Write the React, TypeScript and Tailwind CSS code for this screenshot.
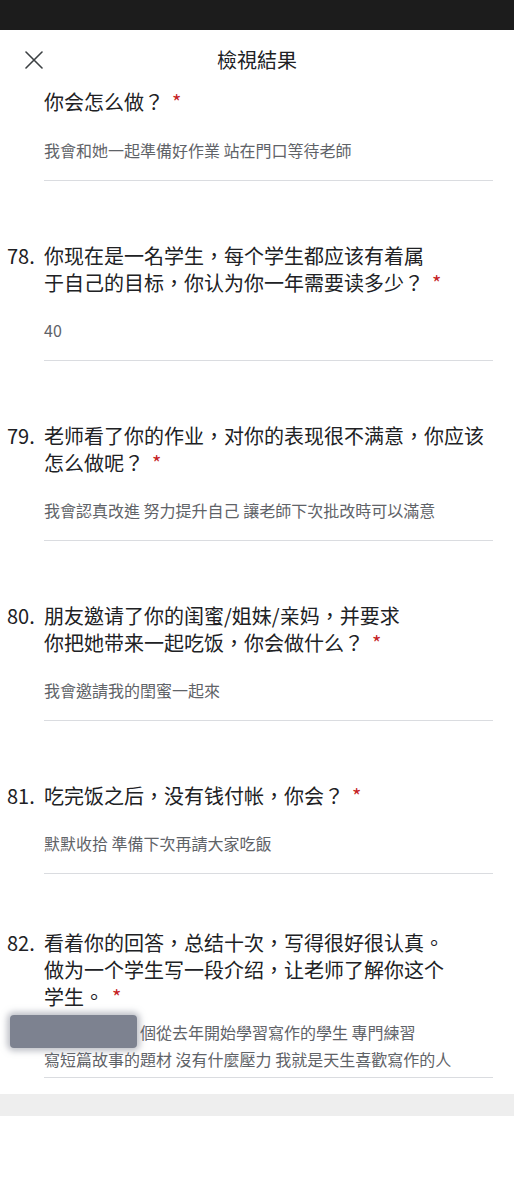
/* Neutral placeholder content: the original screenshot's wording is not reproduced. */
interface Item {
  num: string;
  question: string[];
  answer: string[];
  redacted?: boolean;
}

const items: Item[] = [
  { num: "78.", question: ["你现在是一名学生，每个学生都应该有着属", "于自己的目标，你认为你一年需要读多少？"], answer: ["40"] },
  { num: "79.", question: ["老师看了你的作业，对你的表现很不满意，你应该", "怎么做呢？"], answer: ["我會認真改進 努力提升自己 讓老師下次批改時可以滿意"] },
  { num: "80.", question: ["朋友邀请了你的闺蜜/姐妹/亲妈，并要求", "你把她带来一起吃饭，你会做什么？"], answer: ["我會邀請我的閨蜜一起來"] },
  { num: "81.", question: ["吃完饭之后，没有钱付帐，你会？"], answer: ["默默收拾 準備下次再請大家吃飯"] },
  {
    num: "82.",
    question: ["看着你的回答，总结十次，写得很好很认真。", "做为一个学生写一段介绍，让老师了解你这个", "学生。"],
    answer: ["個從去年開始學習寫作的學生 專門練習", "寫短篇故事的題材 沒有什麼壓力 我就是天生喜歡寫作的人"],
    redacted: true,
  },
];

function Block({ item }: { item: Item }) {
  return (
    <div className={item.redacted ? "pt-[55px]" : "pt-[61px]"}>
      <div className="flex">
        <span className="w-[44px] pl-[7px] text-[20px] leading-[27px] text-[#202124]">{item.num}</span>
        <p className="flex-1 text-[20px] leading-[27px] text-[#202124]">
          {item.question.map((line, i) => (
            <span key={i} className="block">
              {line}
              {i === item.question.length - 1 && <span className="ml-2 text-[#c5221f]">*</span>}
            </span>
          ))}
        </p>
      </div>
      <div
        className={`relative ml-[44px] mr-[21px] border-b border-[#dadce0] ${
          item.redacted ? "pt-[9px] pb-[4px]" : "pt-[21px] pb-[16px]"
        }`}
      >
        {item.redacted && (
          <div className="absolute left-[-34px] top-[5px] h-[33px] w-[127px] rounded-sm bg-[#7d8290] shadow-[0_0_6px_3px_rgba(125,130,144,0.5)]" />
        )}
        {item.answer.map((line, i) => (
          <p key={i} className="text-[16px] leading-[27px] text-[#5f6368] whitespace-nowrap">
            {item.redacted && i === 0 && <span className="inline-block w-[96px]" />}
            {line}
          </p>
        ))}
      </div>
    </div>
  );
}

export default function App() {
  return (
    <div className="min-h-[1200px] bg-white" style={{ fontFamily: '"Noto Sans CJK TC", "Noto Sans CJK SC", sans-serif' }}>
      <div className="h-[30px] bg-[#1c1c1c]" />
      <header className="relative flex h-[60px] items-center justify-center">
        <svg className="absolute left-[25px] top-[21px]" width="18" height="18" viewBox="0 0 18 18" fill="none">
          <path d="M1 1L17 17M17 1L1 17" stroke="#3c4043" strokeWidth="1.6" strokeLinecap="round" />
        </svg>
        <h1 className="text-[20px] text-[#202124]">檢視結果</h1>
      </header>

      {/* partially scrolled first question */}
      <div className="-mt-[2px]">
        <p className="pl-[44px] text-[20px] leading-[27px] text-[#202124]">
          你会怎么做？<span className="ml-2 text-[#c5221f]">*</span>
        </p>
        <div className="ml-[44px] mr-[21px] border-b border-[#dadce0] pt-[22px] pb-[16px]">
          <p className="text-[16px] leading-[27px] text-[#5f6368]">我會和她一起準備好作業 站在門口等待老師</p>
        </div>
      </div>

      {items.map((item) => (
        <Block key={item.num} item={item} />
      ))}

      <div className="mt-[16px] h-[22px] bg-[#eeeeee]" />
    </div>
  );
}
